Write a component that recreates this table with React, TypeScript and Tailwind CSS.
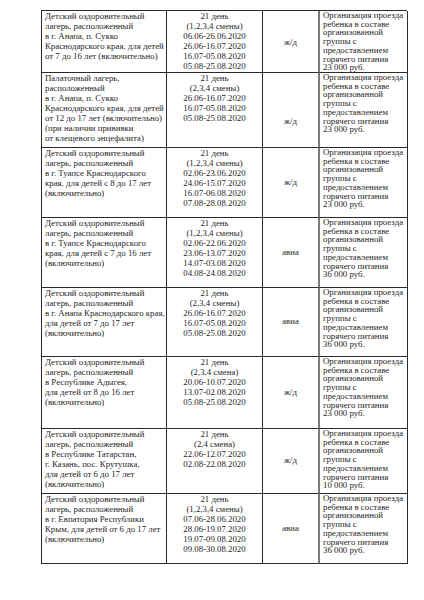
const rows = [
  {
    h: "h-[62px]",
    place: [
      "Детский оздоровительный",
      "лагерь, расположенный",
      "в г. Анапа, п. Сукко",
      "Краснодарского края, для детей",
      "от 7 до 16 лет (включительно)",
    ],
    dates: ["21 день", "(1,2,3,4 смены)", "06.06-26.06.2020", "26.06-16.07.2020", "16.07-05.08.2020", "05.08-25.08.2020"],
    trip: "ж/д",
    tripPad: "pt-[2px]",
    price: "23 000 руб.",
  },
  {
    h: "h-[75px]",
    place: [
      "Палаточный лагерь,",
      "расположенный",
      "в г. Анапа, п. Сукко",
      "Краснодарского края, для детей",
      "от 12 до 17 лет (включительно)",
      "(при наличии прививки",
      "от клещевого энцефалита)",
    ],
    dates: ["21 день", "(2,3,4 смены)", "26.06-16.07.2020", "16.07-05.08.2020", "05.08-25.08.2020"],
    trip: "ж/д",
    tripPad: "pt-[24px]",
    price: "23 000 руб.",
  },
  {
    h: "h-[70px]",
    place: [
      "Детский оздоровительный",
      "лагерь, расположенный",
      "в г. Туапсе Краснодарского",
      "края, для детей с 8 до 17 лет",
      "(включительно)",
    ],
    dates: ["21 день", "(1,2,3,4 смены)", "02.06-23.06.2020", "24.06-15.07.2020", "16.07-06.08.2020", "07.08-28.08.2020"],
    trip: "ж/д",
    tripPad: "",
    price: "23 000 руб.",
  },
  {
    h: "h-[70px]",
    place: [
      "Детский оздоровительный",
      "лагерь, расположенный",
      "в г. Туапсе Краснодарского",
      "края, для детей с 7 до 16 лет",
      "(включительно)",
    ],
    dates: ["21 день", "(1,2,3,4 смены)", "02.06-22.06.2020", "23.06-13.07.2020", "14.07-03.08.2020", "04.08-24.08.2020"],
    trip: "авиа",
    tripPad: "",
    price: "36 000 руб.",
  },
  {
    h: "h-[69px]",
    place: [
      "Детский оздоровительный",
      "лагерь, расположенный",
      "в г. Анапа Краснодарского края,",
      "для детей от 7 до 17 лет",
      "(включительно)",
    ],
    dates: ["21 день", "(2,3,4 смены)", "26.06-16.07.2020", "16.07-05.08.2020", "05.08-25.08.2020"],
    trip: "авиа",
    tripPad: "",
    price: "36 000 руб.",
  },
  {
    h: "h-[72px]",
    place: [
      "Детский оздоровительный",
      "лагерь, расположенный",
      "в Республике Адыгея,",
      "для детей от 8 до 16 лет",
      "(включительно)",
    ],
    dates: ["21 день", "(2,3,4 смена)", "20.06-10.07.2020", "13.07-02.08.2020", "05.08-25.08.2020"],
    trip: "ж/д",
    tripPad: "",
    price: "23 000 руб.",
  },
  {
    h: "h-[65px]",
    place: [
      "Детский оздоровительный",
      "лагерь, расположенный",
      "в Республике Татарстан,",
      "г. Казань, пос. Крутушка,",
      "для детей от 6 до 17 лет",
      "(включительно)",
    ],
    dates: ["21 день", "(2,4 смена)", "22.06-12.07.2020", "02.08-22.08.2020"],
    trip: "ж/д",
    tripPad: "",
    price: "10 000 руб.",
  },
  {
    h: "h-[70px]",
    place: [
      "Детский оздоровительный",
      "лагерь, расположенный",
      "в г. Евпатория Республики",
      "Крым, для детей от 6 до 17 лет",
      "(включительно)",
    ],
    dates: ["21 день", "(1,2,3,4 смены)", "07.06-28.06.2020", "28.06-19.07.2020", "19.07-09.08.2020", "09.08-30.08.2020"],
    trip: "авиа",
    tripPad: "",
    price: "36 000 руб.",
  },
]

const terms = [
  "Организация проезда",
  "ребенка в составе",
  "организованной",
  "группы с",
  "предоставлением",
  "горячего питания",
]

export default function App() {
  return (
    <div className="w-[424px] h-[600px] bg-white pt-[10px] pl-[41px] font-['Liberation_Serif',serif] text-[8.8px] text-[#262626]">
      <div className="w-[366px] border-t border-l border-[#2a2a2a]">
        {rows.map((row, i) => (
          <div key={i} className={`flex ${row.h}`}>
            {/* place */}
            <div className="w-[125px] shrink-0 border-r border-b border-[#2a2a2a] pl-[3px] leading-[10px] whitespace-nowrap">
              {row.place.map((l, j) => (
                <div key={j}>{l}</div>
              ))}
            </div>
            {/* dates */}
            <div className="w-[96px] shrink-0 border-r border-b border-[#2a2a2a] text-center leading-[10px] whitespace-nowrap">
              {row.dates.map((l, j) => (
                <div key={j}>{l}</div>
              ))}
            </div>
            {/* transport */}
            <div className={`w-[55px] shrink-0 border-b border-[#2a2a2a] flex items-center justify-center ${row.tripPad}`}>
              {row.trip}
            </div>
            {/* terms */}
            <div className="w-[90px] shrink-0 border-l-2 border-r border-b border-l-[#7a7a7a] border-r-[#2a2a2a] border-b-[#2a2a2a] pl-[3px] leading-[8.7px] whitespace-nowrap">
              {terms.map((l, j) => (
                <div key={j}>{l}</div>
              ))}
              <div>{row.price}</div>
            </div>
          </div>
        ))}
      </div>
    </div>
  )
}
